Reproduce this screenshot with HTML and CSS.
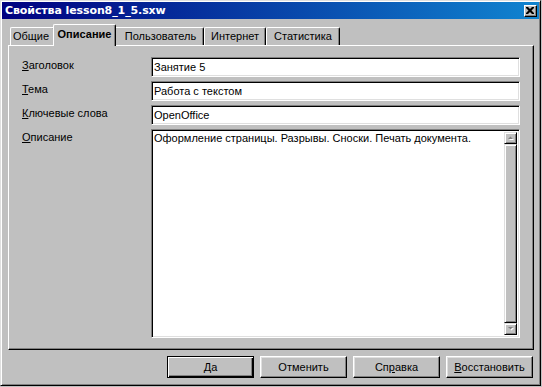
FILE: index.html
```html
<!DOCTYPE html>
<html lang="ru">
<head>
<meta charset="utf-8">
<title>Свойства lesson8_1_5.sxw</title>
<link rel="stylesheet" href="styles.css">
</head>
<body>
<div class="window">
  <div class="titlebar">
    <span class="title">Свойства lesson8_1_5.sxw</span>
    <span class="close">
      <svg width="8" height="7" viewBox="0 0 8 7"><path d="M0 0h2l2 2 2-2h2v1l-2.5 2.5 2.5 2.5v1h-2l-2-2-2 2h-2v-1l2.5-2.5-2.5-2.5z" fill="#000"/></svg>
    </span>
  </div>
  <div class="content">
    <div class="tabs">
      <div class="tab tab-general">Общие</div>
      <div class="tab tab-desc active">Описание</div>
      <div class="tab tab-user">Пользователь</div>
      <div class="tab tab-inet">Интернет</div>
      <div class="tab tab-stat">Статистика</div>
    </div>
    <div class="panel">
      <div class="form">
        <div class="label"><u>З</u>аголовок</div>
        <div class="field">Занятие 5</div>
        <div class="label"><u>Т</u>ема</div>
        <div class="field">Работа с текстом</div>
        <div class="label"><u>К</u>лючевые слова</div>
        <div class="field">OpenOffice</div>
        <div class="label"><u>О</u>писание</div>
        <div class="field area">
          <div class="area-text">Оформление страницы. Разрывы. Сноски. Печать документа.</div>
          <div class="scrollbar">
            <div class="sb-btn"><svg width="7" height="5" viewBox="0 0 7 5"><path d="M3.5 0.5L6 3H1z" fill="#fff" transform="translate(1 1)"/><path d="M3.5 0.5L6 3H1z" fill="#808080"/></svg></div>
            <div class="sb-track"></div>
            <div class="sb-btn"><svg width="7" height="5" viewBox="0 0 7 5"><path d="M1 0H6L3.5 2.5z" fill="#fff" transform="translate(1 1)"/><path d="M1 0H6L3.5 2.5z" fill="#808080"/></svg></div>
          </div>
        </div>
      </div>
    </div>
    <div class="buttons">
      <div class="btn default">Да</div>
      <div class="btn">Отменить</div>
      <div class="btn">Сп<u>р</u>авка</div>
      <div class="btn"><u>В</u>осстановить</div>
    </div>
  </div>
</div>
</body>
</html>
```

FILE: styles.css
```css
html, body {
  margin: 0;
  padding: 0;
  background: #c0c0c0;
}
body {
  font-family: "Liberation Sans", Arial, sans-serif;
  font-size: 11px;
  color: #000;
}
.window {
  box-sizing: border-box;
  width: 541px;
  height: 386px;
  border: 1px solid;
  border-color: #dfdfdf #000 #000 #dfdfdf;
  box-shadow: inset 1px 1px #fff, inset -1px -1px #808080;
  padding: 1px;
  background: #c0c0c0;
  display: flex;
  flex-direction: column;
}
.titlebar {
  height: 17px;
  background: linear-gradient(to right, #000080, #1084d0);
  display: flex;
  align-items: center;
  justify-content: space-between;
  padding-left: 3px;
  padding-right: 2px;
}
.title {
  color: #fff;
  font-family: "DejaVu Sans", Verdana, sans-serif;
  font-weight: bold;
  font-size: 11px;
  line-height: 17px;
  letter-spacing: -0.1px;
}
.close {
  box-sizing: border-box;
  width: 13px;
  height: 12px;
  background: #c0c0c0;
  border: 1px solid;
  border-color: #fff #000 #000 #fff;
  box-shadow: inset -1px -1px #808080;
  display: flex;
  align-items: center;
  justify-content: center;
  padding: 0 1px 1px 0;
}
.close svg { display: block; }
.content {
  flex: 1;
  display: flex;
  flex-direction: column;
  padding: 5px 5px 0 6px;
}
.tabs {
  display: flex;
  height: 21px;
  padding-left: 2px;
  align-items: flex-end;
}
.tab {
  box-sizing: border-box;
  height: 18px;
  padding: 0;
  line-height: 16px;
  text-align: center;
  border-left: 1px solid #fff;
  border-top: 1px solid #fff;
  border-right: 1px solid #000;
  box-shadow: inset -1px 0 #808080;
  border-top-left-radius: 2px;
  border-top-right-radius: 2px;
  background: #c0c0c0;
  white-space: nowrap;
}
.tab-general { width: 45px; padding-right: 3px; }
.tab-desc { width: 59px; }
.tab-user { width: 90px; padding-left: 3px; }
.tab-inet { width: 62px; }
.tab-stat { width: 74px; }
.tab.active {
  position: relative;
  z-index: 2;
  width: 63px;
  height: 22px;
  margin: 0 -2px -1px -2px;
  line-height: 19px;
  font-weight: bold;
}
.panel {
  box-sizing: border-box;
  height: 305px;
  border-left: 1px solid #fff;
  border-top: 1px solid #fff;
  border-right: 1px solid #000;
  border-bottom: 1px solid #000;
  box-shadow: inset -1px -1px #808080;
  padding: 11px 13px 11px 13px;
  display: flex;
  flex-direction: column;
}
.form {
  flex: 1;
  display: grid;
  grid-template-columns: 129px 1fr;
  grid-template-rows: 20px 20px 20px 1fr;
  row-gap: 4px;
}
.label {
  line-height: 13px;
  padding-top: 2px;
}
.label u, .btn u { text-underline-offset: 1px; }
.field {
  box-sizing: border-box;
  background: #fff;
  border: 1px solid;
  border-color: #808080 #fff #fff #808080;
  box-shadow: inset 1px 1px #000, inset -1px -1px #dfdfdf;
  padding: 2px 2px 0 2px;
  line-height: 15px;
  white-space: nowrap;
  overflow: hidden;
}
.field.area {
  display: flex;
  padding: 2px 2px 2px 2px;
  line-height: 13px;
}
.area-text {
  flex: 1;
}
.scrollbar {
  width: 13px;
  display: flex;
  flex-direction: column;
}
.sb-btn, .sb-track {
  box-sizing: border-box;
  background: #c0c0c0;
  border: 1px solid;
  border-color: #dfdfdf #000 #000 #dfdfdf;
  box-shadow: inset 1px 1px #fff, inset -1px -1px #808080;
}
.sb-btn {
  height: 12px;
  display: flex;
  align-items: center;
  justify-content: center;
}
.sb-btn svg { display: block; }
.sb-track { flex: 1; }
.buttons {
  display: flex;
  justify-content: flex-end;
  gap: 6px;
  margin-top: 6px;
  padding-right: 1px;
}
.btn {
  box-sizing: border-box;
  width: 87px;
  height: 22px;
  border: 1px solid;
  border-color: #fff #000 #000 #fff;
  box-shadow: inset -1px -1px #808080, inset 1px 1px #dfdfdf;
  display: flex;
  align-items: center;
  justify-content: center;
  line-height: 13px;
}
.btn.default {
  border-color: #000;
  box-shadow: inset 1px 1px #fff, inset -1px -1px #000, inset -2px -2px #808080;
}
```
